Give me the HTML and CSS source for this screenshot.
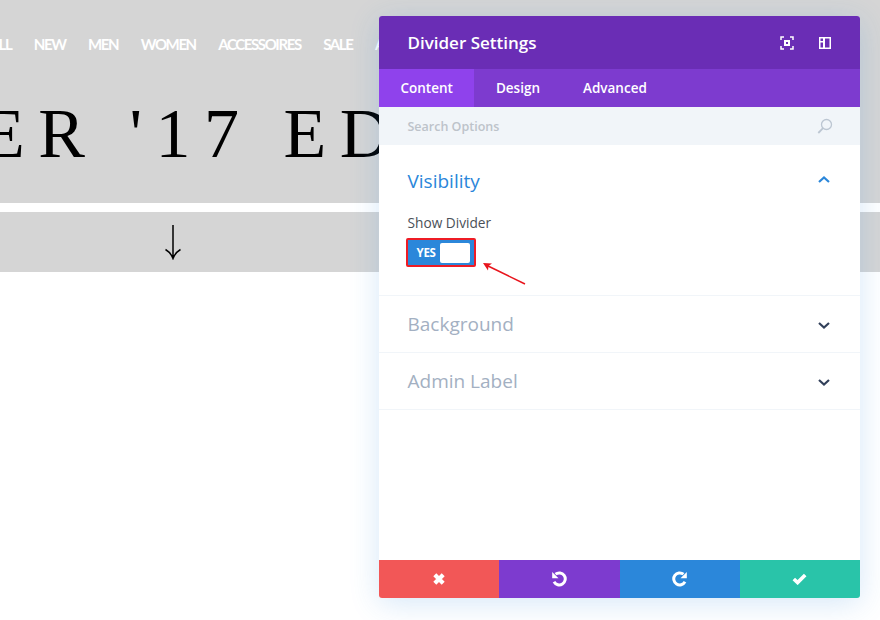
FILE: index.html
```html
<!DOCTYPE html>
<html lang="en">
<head>
  <meta charset="UTF-8" />
  <title>Divider Settings</title>
  <link rel="stylesheet" href="styles.css">
</head>
<body>

<div class="hero">
  <nav class="nav">
    <a>ALL</a><a>NEW</a><a>MEN</a><a>WOMEN</a><a>ACCESSOIRES</a><a>SALE</a><a>ABOUT</a>
  </nav>
  <div class="title">ER '17 EDITION</div>
</div>
<div class="arrow-bar">
  <svg class="arrow" width="18" height="36" viewBox="0 0 18 36">
    <path d="M9 1V34M1.5 25.5C5 27.5 7.5 30.5 9 34.5C10.5 30.5 13 27.5 16.5 25.5" fill="none" stroke="#000" stroke-width="1.5"/>
  </svg>
</div>

<div class="panel">
  <div class="panel-head">
    <h1>Divider Settings</h1>
    <svg class="head-icon" width="14" height="14" viewBox="0 0 14 14" fill="none" stroke="#fff" stroke-width="1.5">
      <path d="M1 4V1H4M10 1H13V4M13 10V13H10M4 13H1V10"/>
      <rect x="4" y="4" width="6" height="6" fill="#fff" stroke="none"/>
      <rect x="6" y="6" width="2" height="2" fill="#6a2db5" stroke="none"/>
    </svg>
    <svg class="head-icon" width="14" height="14" viewBox="0 0 14 14">
      <path fill="#fff" fill-rule="evenodd" d="M1 1H13V13H1ZM2.5 2.5V5H5V2.5ZM2.5 6.5V11.5H5V6.5ZM7 2.5V11.5H11.5V2.5Z"/>
    </svg>
  </div>
  <div class="tabs">
    <div class="tab active">Content</div>
    <div class="tab">Design</div>
    <div class="tab">Advanced</div>
  </div>
  <div class="search">
    <span>Search Options</span>
    <svg width="16" height="16" viewBox="0 0 16 16" fill="none" stroke="#bcc6d2" stroke-width="1.3">
      <circle cx="9.5" cy="6.5" r="5"/>
      <path d="M6 10.2L1.3 15" stroke-width="1.8"/>
    </svg>
  </div>

  <div class="group open">
    <div class="group-head">
      <h2>Visibility</h2>
      <svg class="chev" width="14" height="9" viewBox="0 0 14 9"><path d="M2 7L7 2.5L12 7" fill="none" stroke="#2b87da" stroke-width="2.2"/></svg>
    </div>
    <div class="field-label">Show Divider</div>
    <div class="toggle-wrap">
      <div class="toggle">
        <span>YES</span>
        <i class="knob"></i>
      </div>
      <svg class="pointer" width="46" height="26" viewBox="0 0 46 26">
        <path d="M45 24L6 5" stroke="#e8141c" stroke-width="1.5" fill="none"/>
        <path d="M3 3L12 3.5L8.5 6L8 10.5Z" fill="#e8141c"/>
      </svg>
    </div>
  </div>

  <div class="group">
    <div class="group-head">
      <h2>Background</h2>
      <svg class="chev" width="14" height="9" viewBox="0 0 14 9"><path d="M2 2L7 6.5L12 2" fill="none" stroke="#32405a" stroke-width="2.2"/></svg>
    </div>
  </div>
  <div class="group">
    <div class="group-head">
      <h2>Admin Label</h2>
      <svg class="chev" width="14" height="9" viewBox="0 0 14 9"><path d="M2 2L7 6.5L12 2" fill="none" stroke="#32405a" stroke-width="2.2"/></svg>
    </div>
  </div>

  <div class="panel-fill"></div>

  <div class="actions">
    <button class="red">
      <svg width="14" height="14" viewBox="0 0 14 14"><path d="M2.8 2.8L11.2 11.2M11.2 2.8L2.8 11.2" stroke="#fff" stroke-width="4.2" fill="none"/></svg>
    </button>
    <button class="purple">
      <svg width="16" height="16" viewBox="0 0 16 16" fill="none"><path d="M4.5 3.2A6 6 0 1 1 3 10.8" stroke="#fff" stroke-width="3"/><path d="M1.2 1V7.3H7.5Z" fill="#fff"/></svg>
    </button>
    <button class="blue">
      <svg width="16" height="16" viewBox="0 0 16 16" fill="none"><path d="M11.5 3.2A6 6 0 1 0 13 10.8" stroke="#fff" stroke-width="3"/><path d="M14.8 1V7.3H8.5Z" fill="#fff"/></svg>
    </button>
    <button class="green">
      <svg width="15" height="12" viewBox="0 0 15 12"><path d="M1.8 6L5.6 9.6L13.2 2" stroke="#fff" stroke-width="3.6" fill="none"/></svg>
    </button>
  </div>
</div>

</body>
</html>
```

FILE: styles.css
```css
* { box-sizing: border-box; }

html, body {
  margin: 0;
  padding: 0;
  height: 620px;
  overflow: hidden;
  background: white;
}

body {
  position: relative;
  font-family: "Open Sans", sans-serif;
}

.hero {
  height: 203px;
  background: #d5d5d5;
  overflow: hidden;
}

.nav {
  display: flex;
  gap: 22.5px;
  margin-left: -10.5px;
  padding-top: 35px;
  font-family: Lato, sans-serif;
  font-size: 15px;
  line-height: 18px;
  font-weight: 700;
  letter-spacing: -1.4px;
  color: white;
  white-space: nowrap;
}

.title {
  margin-top: 39px;
  margin-left: -18px;
  font-family: "Liberation Serif", serif;
  font-size: 70px;
  line-height: 84px;
  letter-spacing: 13.5px;
  color: black;
  white-space: nowrap;
}

.arrow-bar {
  display: flex;
  align-items: center;
  height: 60px;
  margin-top: 9px;
  padding-left: 164px;
  background: #d5d5d5;
}

.panel {
  position: absolute;
  left: 379px;
  top: 16px;
  width: 481px;
  height: 582px;
  display: flex;
  flex-direction: column;
  background: white;
  border-radius: 3px;
  overflow: hidden;
  box-shadow: 0 5px 30px rgba(43, 135, 218, 0.2);
}

.panel-head {
  display: flex;
  align-items: center;
  gap: 24px;
  height: 53px;
  padding: 0 28px 0 28.5px;
  background: #6a2db5;
  flex-shrink: 0;
}

.panel-head h1 {
  flex: 1;
  margin: 0;
  font-size: 17px;
  font-weight: 600;
  color: white;
}

.tabs {
  display: flex;
  height: 38px;
  background: #7d3bcf;
  flex-shrink: 0;
}

.tab {
  padding: 0 21.5px;
  font-size: 13.5px;
  line-height: 38px;
  font-weight: 600;
  color: white;
}

.tab.active {
  background: #8f42ec;
}

.search {
  display: flex;
  align-items: center;
  justify-content: space-between;
  height: 38px;
  padding: 0 27px 0 28.5px;
  background: #f1f5f9;
  font-size: 12.5px;
  font-weight: 600;
  color: #bdc3ca;
  flex-shrink: 0;
}

.group {
  border-bottom: 1px solid #f1f5f9;
  height: 57px;
  padding: 0 28px 0 28.5px;
  flex-shrink: 0;
}

.group.open {
  height: 151px;
}

.group-head {
  display: flex;
  align-items: center;
  justify-content: space-between;
  height: 57px;
  padding-top: 1px;
  padding-right: 1px;
}

.group.open .group-head {
  height: 71px;
  padding-top: 0;
}

.group.open .chev {
  margin-bottom: 3px;
}

.group-head h2 {
  margin: 0 0 2px;
  font-size: 19px;
  font-weight: 400;
  color: #a3b0c2;
}

.group.open h2 {
  margin-bottom: 0;
  color: #2b87da;
}

.field-label {
  font-size: 13.7px;
  line-height: 16px;
  margin-top: -1px;
  font-weight: 400;
  color: #4a5058;
}

.toggle-wrap {
  position: relative;
  margin-top: 7px;
  margin-left: -2px;
}

.toggle {
  display: flex;
  align-items: center;
  justify-content: space-between;
  width: 70px;
  height: 29px;
  padding: 3px 4px 3px 9px;
  background: #2b87da;
  border: 2px solid #ee1c25;
  border-radius: 2px;
  font-size: 11.5px;
  font-weight: 700;
  letter-spacing: -0.3px;
  color: white;
}

.knob {
  display: block;
  width: 30px;
  height: 20px;
  background: white;
  border-radius: 2px;
}

.pointer {
  position: absolute;
  left: 74px;
  top: 22px;
}

.panel-fill {
  flex: 1;
}

.actions {
  display: grid;
  grid-template-columns: repeat(4, 1fr);
  height: 38px;
  flex-shrink: 0;
}

.actions button {
  display: flex;
  align-items: center;
  justify-content: center;
  padding: 0;
  border: none;
}

.red { background: #f25757; }
.purple { background: #7d3bcf; }
.blue { background: #2b87da; }
.green { background: #29c4a9; }
```
